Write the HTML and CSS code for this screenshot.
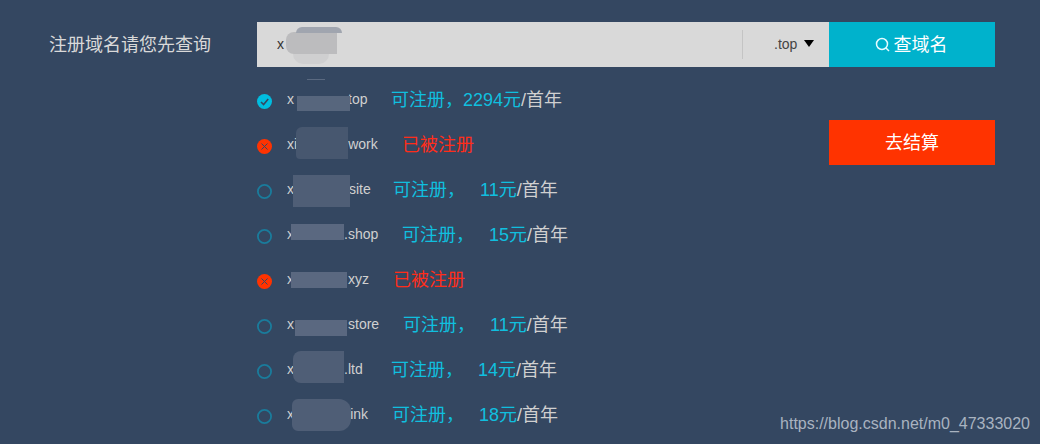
FILE: index.html
```html
<!DOCTYPE html>
<html lang="zh-CN">
<head>
<meta charset="utf-8">
<title>注册域名</title>
<link rel="stylesheet" href="styles.css">
</head>
<body>
<div class="page">
  <div class="label">注册域名请您先查询</div>
  <div class="main">
    <div class="search">
      <div class="field">
        <span class="typed">x</span>
        <i class="blob b-search"></i>
        <i class="blob b-search-top"></i>
        <i class="blob b-search-low"></i>
      </div>
      <div class="divider"></div>
      <div class="suffix">.top<span class="caret"></span></div>
      <button class="btn btn-search">
        <svg class="glass" viewBox="0 0 15 15" width="15" height="15"><circle cx="7" cy="7" r="5.5" fill="none" stroke="#e6fbff" stroke-width="1.5"/><path d="M11 11l3 3" stroke="#e6fbff" stroke-width="1.5" fill="none"/></svg>查域名
      </button>
    </div>
    <div class="results">
      <ul class="list">
        <li class="row r1">
          <svg class="ic" viewBox="0 0 15 15"><circle cx="7.5" cy="7.5" r="7.5" fill="#00bde0"/><path d="M4 8l2.6 2.6L11.2 5" fill="none" stroke="#344761" stroke-width="1.6"/></svg>
          <span class="name">x<span class="gap"><i class="blob"></i><i class="blob b-cap"></i></span>top</span>
          <span class="ok">可注册，2294元</span><span class="year">/首年</span>
        </li>
        <li class="row r2">
          <svg class="ic" viewBox="0 0 15 15"><circle cx="7.5" cy="7.5" r="7.5" fill="#ff3300"/><path d="M4.5 4.5l6 6M10.5 4.5l-6 6" fill="none" stroke="#344761" stroke-width="1"/></svg>
          <span class="name">xi<span class="gap"><i class="blob"></i></span>work</span>
          <span class="taken">已被注册</span>
        </li>
        <li class="row r3">
          <svg class="ic" viewBox="0 0 15 15"><circle cx="7.5" cy="7.5" r="6.6" fill="none" stroke="#1a7c9c" stroke-width="1.8"/></svg>
          <span class="name">x<span class="gap"><i class="blob"></i></span>site</span>
          <span class="ok">可注册，<span class="amount">11元</span></span><span class="year">/首年</span>
        </li>
        <li class="row r4">
          <svg class="ic" viewBox="0 0 15 15"><circle cx="7.5" cy="7.5" r="6.6" fill="none" stroke="#1a7c9c" stroke-width="1.8"/></svg>
          <span class="name">x<span class="gap"><i class="blob"></i></span>.shop</span>
          <span class="ok">可注册，<span class="amount">15元</span></span><span class="year">/首年</span>
        </li>
        <li class="row r5">
          <svg class="ic" viewBox="0 0 15 15"><circle cx="7.5" cy="7.5" r="7.5" fill="#ff3300"/><path d="M4.5 4.5l6 6M10.5 4.5l-6 6" fill="none" stroke="#344761" stroke-width="1"/></svg>
          <span class="name">x<span class="gap"><i class="blob"></i></span>xyz</span>
          <span class="taken">已被注册</span>
        </li>
        <li class="row r6">
          <svg class="ic" viewBox="0 0 15 15"><circle cx="7.5" cy="7.5" r="6.6" fill="none" stroke="#1a7c9c" stroke-width="1.8"/></svg>
          <span class="name">x<span class="gap"><i class="blob"></i></span>store</span>
          <span class="ok">可注册，<span class="amount">11元</span></span><span class="year">/首年</span>
        </li>
        <li class="row r7">
          <svg class="ic" viewBox="0 0 15 15"><circle cx="7.5" cy="7.5" r="6.6" fill="none" stroke="#1a7c9c" stroke-width="1.8"/></svg>
          <span class="name">x<span class="gap"><i class="blob"></i></span>.ltd</span>
          <span class="ok">可注册，<span class="amount">14元</span></span><span class="year">/首年</span>
        </li>
        <li class="row r8">
          <svg class="ic" viewBox="0 0 15 15"><circle cx="7.5" cy="7.5" r="6.6" fill="none" stroke="#1a7c9c" stroke-width="1.8"/></svg>
          <span class="name">xi<span class="gap"><i class="blob"></i></span>ink</span>
          <span class="ok">可注册，<span class="amount">18元</span></span><span class="year">/首年</span>
        </li>
      </ul>
      <div class="aside"><button class="btn btn-pay">去结算</button></div>
    </div>
  </div>
  <div class="mark">https://blog.csdn.net/m0_47333020</div>
</div>
</body>
</html>
```

FILE: styles.css
```css
* { box-sizing: border-box; }
html, body { margin: 0; height: 100%; overflow: hidden; }
body {
  background: #344761;
  font-family: "Liberation Sans", "Noto Sans CJK SC", sans-serif;
  color: #d9d9d9;
}
.page {
  position: relative;
  display: flex;
  height: 444px;
  padding: 22px 0 0 49px;
  overflow: hidden;
}
.label {
  width: 208px;
  flex: none;
  height: 45px;
  line-height: 42px;
  font-size: 18px;
  font-family: "Noto Sans CJK SC", sans-serif;
}
.main { width: 738px; flex: none; }
.search {
  display: flex;
  align-items: center;
  height: 45px;
  background: #d9d9d9;
  color: #444;
  font-size: 14px;
}
.field {
  position: relative;
  flex: 1;
  height: 45px;
  padding-left: 20px;
  line-height: 44px;
}
.typed { color: #333; }
.divider { width: 1px; height: 29px; background: #c4c4c4; flex: none; }
.suffix {
  display: flex;
  align-items: center;
  width: 86px;
  flex: none;
  padding: 0 0 2px 31px;
}
.caret {
  width: 0;
  height: 0;
  margin-left: 7px;
  margin-top: 0;
  border-left: 5px solid transparent;
  border-right: 5px solid transparent;
  border-top: 7px solid #000;
}
.btn {
  display: flex;
  align-items: center;
  justify-content: center;
  width: 166px;
  height: 45px;
  flex: none;
  padding: 0 0 3px;
  border: 0;
  color: #fff;
  font: 18px "Noto Sans CJK SC", sans-serif;
}
.btn-search { background: #00b2cc; }
.btn-pay { background: #ff3300; }
.glass { margin: 2px 4px 0 -2px; }
.results { display: flex; }
.list {
  flex: 1;
  margin: 0;
  padding: 11px 0 0;
  list-style: none;
}
.aside { width: 166px; flex: none; padding-top: 53px; }
.row {
  display: flex;
  align-items: center;
  height: 45px;
  white-space: nowrap;
}
.ic { width: 15px; height: 15px; flex: none; margin: 2px 15px 0 0; }
.name { display: block; font-size: 14px; color: #d0d0d0; margin-top: -3px; }
.ok, .year, .taken {
  font-size: 18px;
  font-family: "Liberation Sans", "Noto Sans CJK SC", sans-serif;
  margin-top: -5px;
}
.ok { color: #10bfdf; }
.year { color: #d0d0d0; }
.taken { color: #ff2d1a; }
.amount { margin-left: 15px; }
.r1 .name { width: 104px; }
.r2 .name { width: 115px; }
.r3 .name { width: 106px; }
.r4 .name { width: 115px; }
.r5 .name { width: 106px; }
.r6 .name { width: 116px; }
.r7 .name { width: 104px; }
.r8 .name { width: 105px; }
.gap { position: relative; display: inline-block; height: 1px; }
.r1 .gap { width: 54px; }
.r2 .gap { width: 51px; }
.r3 .gap { width: 55px; }
.r4 .gap { width: 50px; }
.r5 .gap { width: 54px; }
.r6 .gap { width: 54px; }
.r7 .gap { width: 50px; }
.r8 .gap { width: 53px; }
.blob {
  position: absolute;
  display: block;
  background: #57667d;
}
.r1 .blob { left: 3px; width: 53px; top: -7px; height: 15px; }
.r1 .b-cap { left: 13px; width: 18px; top: -24px; height: 1px; background: #5a6980; }
.r2 .blob { left: -1px; width: 52px; top: -21px; height: 32px; background: #47576f; border-radius: 6px 0 0 4px; }
.r3 .blob { left: -1px; width: 57px; top: -18px; height: 32px; background: #4f5e76; }
.r4 .blob { left: -3px; width: 53px; top: -14px; height: 16px; background: #5a6880; }
.r5 .blob { left: -3px; width: 56px; top: -11px; height: 16px; background: #5a6880; }
.r6 .blob { left: 1px; width: 52px; top: -8px; height: 16px; background: #5a6880; }
.r7 .blob { left: -1px; width: 51px; top: -22px; height: 32px; background: #4f5e76; border-radius: 8px 0 0 8px; }
.r8 .blob { left: -5px; width: 59px; top: -19px; height: 32px; background: #4f5e76; border-radius: 6px 12px 12px 6px; }
.b-search { left: 29px; top: 10px; width: 51px; height: 22px; background: #bcbcbe; border-radius: 8px 0 0 8px; }
.b-search-top { left: 39px; top: 5px; width: 46px; height: 6px; background: #a0a5af; border-radius: 8px 8px 0 0; }
.b-search-low { left: 36px; top: 32px; width: 36px; height: 10px; background: #cfcfd0; border-radius: 0 0 10px 10px; }
.mark {
  position: absolute;
  right: 10px;
  bottom: 10px;
  font-size: 16px;
  line-height: 20px;
  color: #a9b3c0;
}
```
